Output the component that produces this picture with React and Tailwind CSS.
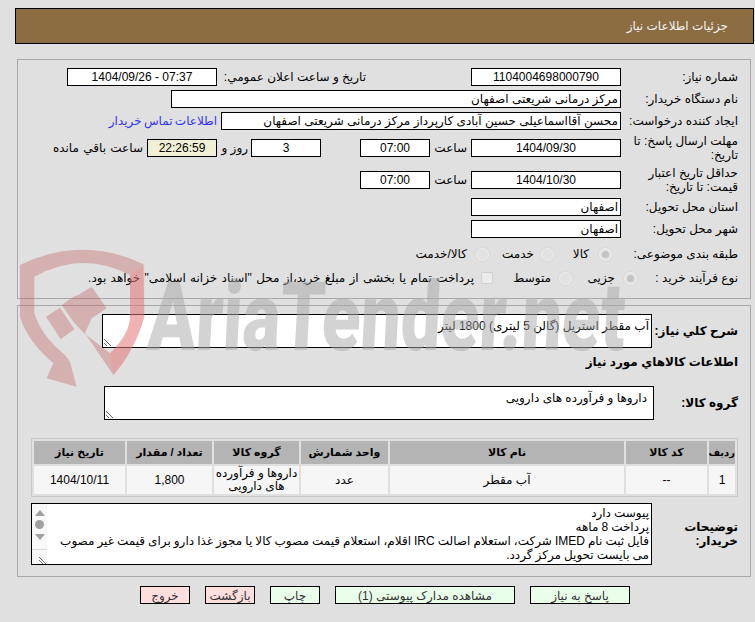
import React from "react";

function Box({ value, className = "w-[150px]", center = true }) {
  return (
    <input
      readOnly
      value={value}
      className={`h-[18px] shrink-0 border border-black bg-white px-[2px] text-black outline-none ${center ? "text-center" : "text-right"} ${className}`}
    />
  );
}

function Label({ children, className = "w-[117px]" }) {
  return <div className={`shrink-0 pl-2 leading-[14px] ${className}`}>{children}</div>;
}

function Radio({ checked }) {
  return (
    <span className="flex h-[13px] w-[13px] shrink-0 items-center justify-center rounded-full border border-[#f0f0f0] bg-[#e2e2e2] shadow-[0_0_0_1px_#d8d8d8]">
      {checked && <span className="h-[7px] w-[7px] rounded-full bg-[#c4c4c4]" />}
    </span>
  );
}

function Button({ children, className }) {
  return (
    <button className={`h-[18px] shrink-0 border border-black text-center text-[#333] ${className}`}>
      {children}
    </button>
  );
}

const heads = ["کد کالا", "نام کالا", "واحد شمارش", "گروه کالا", "تعداد / مقدار", "تاریخ نیاز"];

export default function App() {
  return (
    <div
      dir="rtl"
      className="relative h-[622px] w-[755px] overflow-hidden bg-[#e0e0e0] pt-2 text-[12px] text-black [font-family:'Liberation_Sans','DejaVu_Sans',sans-serif]"
    >
      <div className="ml-[15px] mr-px flex h-[36px] items-center border border-black bg-[#8c6d42] pr-[25px] text-[#f4f4f4]">
        جزئیات اطلاعات نیاز
      </div>

      <div className="ml-[17px] mr-1 mt-[15px] flex h-[240px] flex-col border border-[#a8a8a8] pr-3 pt-2">
        <div className="flex items-center">
          <Label>شماره نیاز:</Label>
          <Box value="1104004698000790" />
          <div className="mr-[105px] w-[149px] shrink-0">تاریخ و ساعت اعلان عمومي:</div>
          <Box value="07:37 - 1404/09/26" />
        </div>
        <div className="mt-1 flex items-center">
          <Label>نام دستگاه خریدار:</Label>
          <Box value="مرکز درمانی شریعتی اصفهان" center={false} className="w-[450px]" />
        </div>
        <div className="mt-1 flex items-center">
          <Label>ایجاد کننده درخواست:</Label>
          <Box value="محسن آقااسماعیلی حسین آبادی کارپرداز مرکز درمانی شریعتی اصفهان" center={false} className="w-[400px]" />
          <a className="mr-1 whitespace-nowrap text-[#3333ff] [word-spacing:-1px]">اطلاعات تماس خریدار</a>
        </div>
        <div className="mt-1 flex h-[28px] items-center">
          <Label>مهلت ارسال پاسخ: تا تاریخ:</Label>
          <Box value="1404/09/30" />
          <div className="w-[41px] shrink-0 pr-1">ساعت</div>
          <Box value="07:00" className="w-[70px]" />
          <div className="w-[39px] shrink-0" />
          <Box value="3" className="w-[70px]" />
          <div className="w-[34px] shrink-0 pr-[3px]">روز و</div>
          <input readOnly value="22:26:59" className="h-[18px] w-[70px] shrink-0 border border-black bg-[#f0f0d4] text-center outline-none" />
          <div className="mr-1 whitespace-nowrap [word-spacing:1px]">ساعت باقي مانده</div>
        </div>
        <div className="mt-1 flex h-[28px] items-center">
          <Label>حداقل تاریخ اعتبار قیمت: تا تاریخ:</Label>
          <Box value="1404/10/30" />
          <div className="w-[41px] shrink-0 pr-1">ساعت</div>
          <Box value="07:00" className="w-[70px]" />
        </div>
        <div className="mt-1 flex items-center">
          <Label>استان محل تحویل:</Label>
          <Box value="اصفهان" center={false} />
        </div>
        <div className="mt-1 flex items-center">
          <Label>شهر محل تحویل:</Label>
          <Box value="اصفهان" center={false} />
        </div>
        <div className="mt-[7px] flex h-[18px] items-center">
          <Label className="w-[126px]">طبقه بندی موضوعی:</Label>
          <Radio checked />
          <span className="mr-[10px] w-[35px] shrink-0">کالا</span>
          <Radio />
          <span className="mr-[7px] w-[45px] shrink-0">خدمت</span>
          <Radio />
          <span className="mr-[9px]">کالا/خدمت</span>
        </div>
        <div className="mt-[6px] flex h-[18px] items-center">
          <Label className="w-[101px]">نوع فرآیند خرید :</Label>
          <Radio checked />
          <span className="mr-[9px] w-[43px] shrink-0">جزیی</span>
          <Radio />
          <span className="mr-[8px] w-[58px] shrink-0">متوسط</span>
          <span className="h-[12px] w-[12px] shrink-0 rounded-[2px] border border-[#d0d0d0] bg-[#ececec]" />
          <span className="mr-[7px] whitespace-nowrap [word-spacing:1px]">
            پرداخت تمام یا بخشی از مبلغ خرید،از محل "اسناد خزانه اسلامی" خواهد بود.
          </span>
        </div>
      </div>

      <div className="ml-[17px] mr-1 mt-[6px] h-[272px] border border-[#a8a8a8] pr-3 pt-2">
        <div className="flex items-center">
          <div className="w-[86px] shrink-0 whitespace-nowrap font-bold">شرح کلي نياز:</div>
          <textarea
            readOnly
            defaultValue="آب مقطر استریل (گالن 5 لیتری) 1800 لیتر"
            className="block h-[34px] w-[550px] shrink-0 border border-black bg-white px-[2px] pb-px pt-[4px] leading-[14px] outline-none"
          />
        </div>
        <div className="mt-[7px] h-[14px] font-bold leading-[14px]">اطلاعات کالاهاي مورد نياز</div>
        <div className="mt-[17px] flex items-center">
          <div className="w-[84px] shrink-0 whitespace-nowrap font-bold">گروه کالا:</div>
          <textarea
            readOnly
            defaultValue="داروها و فرآورده های دارویی"
            className="block h-[34px] w-[550px] shrink-0 border border-black bg-white px-[6px] pb-px pt-[4px] leading-[14px] outline-none"
          />
        </div>

        <table className="ml-0 mt-[18px] w-[707px] table-fixed border-separate border-spacing-[2px] border border-[#c8c8c8] text-center">
          <colgroup>
            <col className="w-[26px]" />
            <col className="w-[81px]" />
            <col className="w-[234px]" />
            <col className="w-[87px]" />
            <col className="w-[85px]" />
            <col className="w-[85px]" />
            <col className="w-[91px]" />
          </colgroup>
          <thead>
            <tr>
              <th className="h-[23px] overflow-hidden whitespace-nowrap bg-[#b4b4b4] p-0 text-[10px] font-bold">ردیف</th>
              {heads.map((h) => (
                <th key={h} className="h-[23px] bg-[#b4b4b4] p-0 text-[11px] font-bold">{h}</th>
              ))}
            </tr>
          </thead>
          <tbody>
            <tr className="bg-[#f6f6f6]">
              <td className="h-[28px] p-0">1</td>
              <td className="p-0">--</td>
              <td className="p-0">آب مقطر</td>
              <td className="p-0">عدد</td>
              <td className="p-0 leading-[13px]">داروها و فرآورده های دارویی</td>
              <td className="p-0">1,800</td>
              <td className="p-0">1404/10/11</td>
            </tr>
          </tbody>
        </table>

        <div className="mt-[6px] flex items-center">
          <div className="w-[86px] shrink-0 font-bold leading-[14px]">
            توضیحات خریدار:
          </div>
          <div className="flex h-[62px] w-[621px] shrink-0 border border-black bg-white">
            <div className="min-w-0 flex-1 overflow-hidden pr-[2px] pt-[2px] leading-[14px] [word-spacing:-0.3px]">
              <div>پیوست دارد</div>
              <div>پرداخت 8 ماهه</div>
              <div>فایل ثبت نام IMED شرکت، استعلام اصالت IRC اقلام، استعلام قیمت مصوب کالا یا مجوز غذا دارو برای قیمت غیر مصوب می بایست تحویل مرکز گردد.</div>
            </div>
            <div className="flex w-[15px] shrink-0 flex-col items-center bg-[#f8f8f8] pt-[6px]">
              <svg width="10" height="6" viewBox="0 0 10 6"><path d="M5 0L10 6H0Z" fill="#a0a0a0" /></svg>
              <span className="mt-[4px] h-[9px] w-[9px] rounded-full bg-[#a0a0a0]" />
              <svg className="mt-[5px]" width="10" height="6" viewBox="0 0 10 6"><path d="M0 0H10L5 6Z" fill="#a0a0a0" /></svg>
              <div className="mt-[9px] flex h-[15px] w-full items-end border-t border-[#dcdcdc]">
                <svg width="8" height="8" viewBox="0 0 8 8"><path d="M0 1L7 8M0 4L4 8" stroke="#777" fill="none" /></svg>
              </div>
            </div>
          </div>
        </div>
      </div>

      <div className="mt-[9px] flex gap-[15px] pr-[125px]">
        <Button className="w-[100px] bg-[#eaffea]">پاسخ به نیاز</Button>
        <Button className="w-[180px] bg-[#eaffea]">مشاهده مدارک پیوستی (1)</Button>
        <Button className="w-[50px] bg-[#eaffea]">چاپ</Button>
        <Button className="w-[50px] bg-[#ffdede]">بازگشت</Button>
        <Button className="w-[50px] bg-[#ffdede]">خروج</Button>
      </div>

      {/* watermark lies over the whole page */}
      <div dir="ltr" className="pointer-events-none absolute left-[10px] top-[240px] h-[150px] w-[620px]">
        <svg className="absolute left-0 top-0" width="250" height="150" viewBox="0 0 750 450">
          <path d="M30 75Q215 -15 400 72L403 230Q375 330 310 405L225 280L245 235L290 205L245 140L205 165L190 170L155 195L190 245L222 280L300 340Q360 280 360 230V105Q215 30 73 110V220Q95 290 165 345L180 365L200 440L110 415L130 370Q50 300 30 230Z" fill="#c05c5c" fillOpacity="0.36" />
          <path d="M108 230L150 203L193 268L152 298Z" fill="#c05c5c" fillOpacity="0.36" />
          <path d="M403 72V230Q375 330 310 405L300 340Q360 280 360 230V105Z" fill="#ff8a8a" fillOpacity="0.3" />
        </svg>
        <div className="absolute left-[138px] top-[17px] origin-left whitespace-nowrap text-[96px] font-black leading-[120px] text-[#a8a8a8] opacity-50 [font-family:Roboto,sans-serif] [transform:scaleX(0.74)_skewX(-4deg)]">
          AriaTender.net
        </div>
      </div>
    </div>
  );
}
